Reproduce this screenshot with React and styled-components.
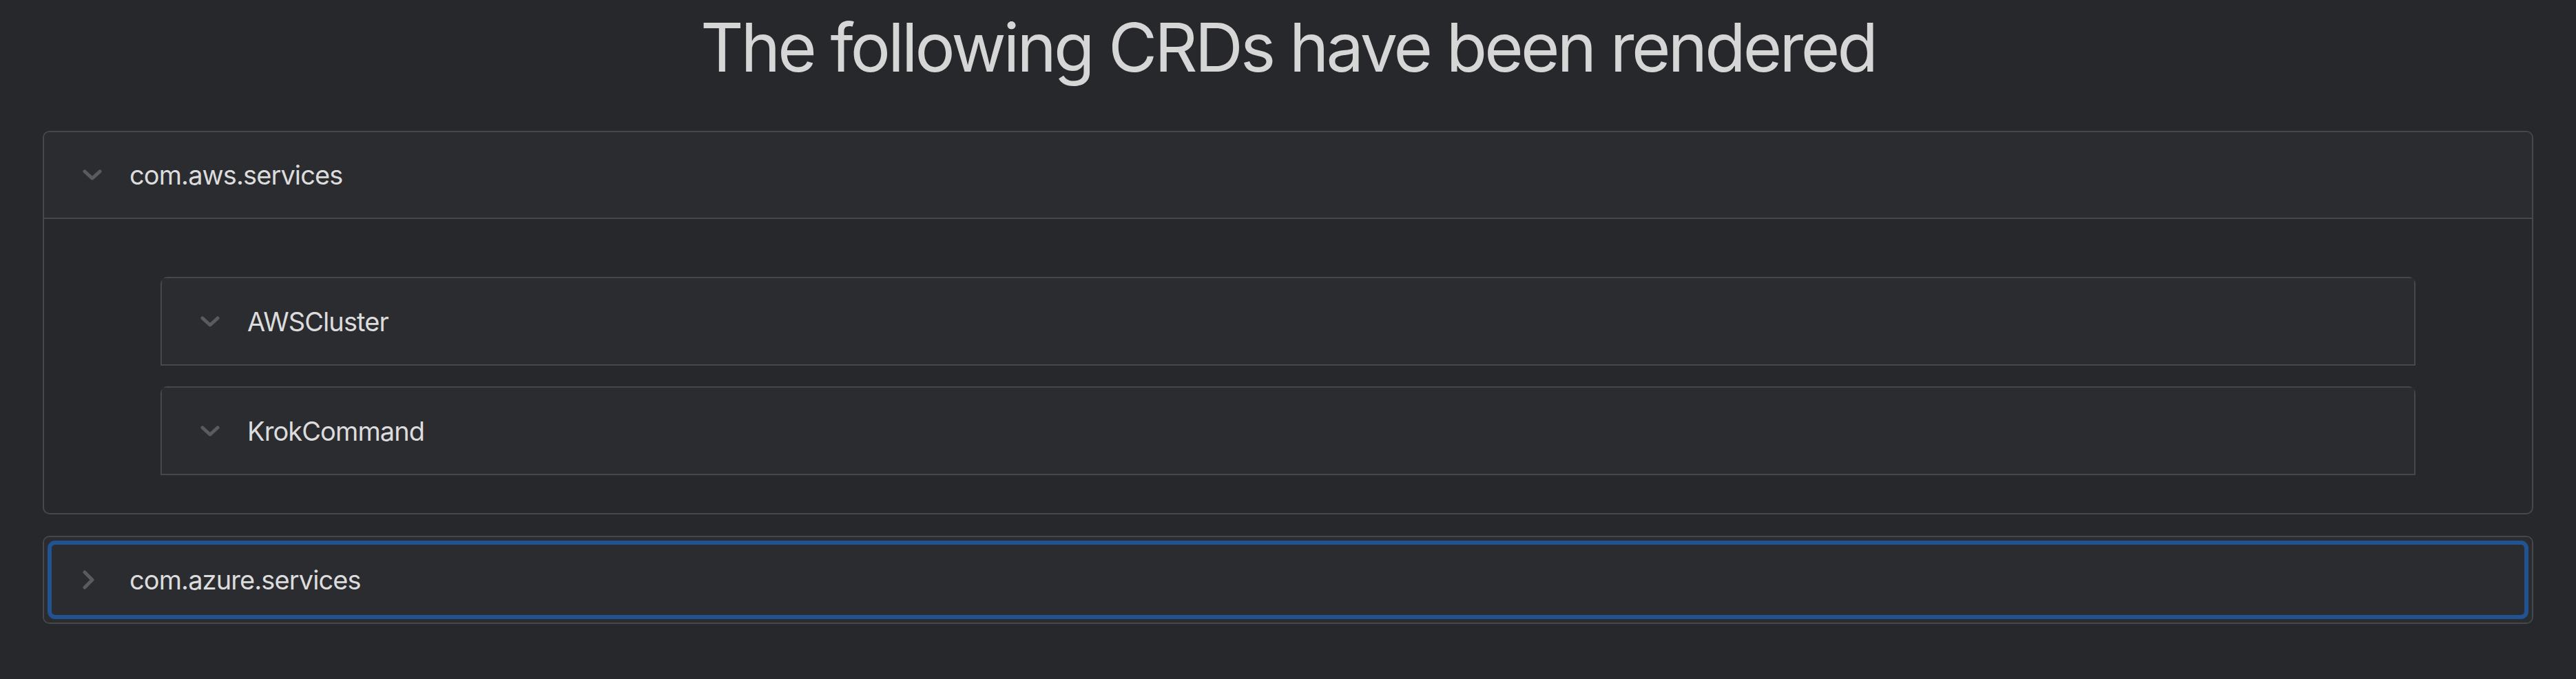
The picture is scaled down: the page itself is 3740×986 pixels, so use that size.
import React from 'react';
import styled, { createGlobalStyle, css } from 'styled-components';

const GlobalStyle = createGlobalStyle`
	body {
		margin: 0;
		background: #27282c;
		font-family: Inter, 'Noto Sans', sans-serif;
	}
`;

const groups = [
	{ name: 'com.aws.services', open: true, items: ['AWSCluster', 'KrokCommand'] },
	{ name: 'com.azure.services', open: false, focused: true, items: [] },
];

const Page = styled.div`
	min-height: 100vh;
	padding: 0 62px;
	box-sizing: border-box;
`;

const Title = styled.h1`
	margin: 0 0 73px;
	padding-top: 20px;
	font-size: 97px;
	line-height: 1;
	font-weight: 400;
	letter-spacing: -3.8px;
	text-align: center;
	color: #d6d6d7;
`;

const List = styled.div`
	display: flex;
	flex-direction: column;
	gap: 31px;
`;

const Group = styled.div`
	border: 2px solid #47484c;
	border-radius: 10px;
	overflow: hidden;
	background: #27282c;
`;

const Header = styled.div`
	position: relative;
	display: flex;
	align-items: center;
	gap: 40px;
	height: ${p => (p.$inner ? 125 : 124)}px;
	padding-left: 56px;
	background: #2b2c30;
	${p =>
		p.$open &&
		css`
			border-bottom: 2px solid #47484c;
		`}
	${p =>
		p.$focused &&
		css`
			&::after {
				content: '';
				position: absolute;
				inset: 5px;
				border: 6px solid #215392;
				border-radius: 11px;
			}
		`}
`;

const Label = styled.span`
	font-size: 38px;
	letter-spacing: -0.9px;
	color: #dcdcdd;
`;

const Body = styled.div`
	display: flex;
	flex-direction: column;
	gap: 30px;
	padding: 84px 169px 55px;
`;

const Item = styled.div`
	border: 2px solid #47484c;
	border-radius: 10px 10px 0 0;
	background: #2b2c30;
`;

const Chevron = ({ open }) => (
	<svg width="28" height="28" viewBox="0 0 28 28" fill="none">
		<polyline
			points={open ? '3,9 14,19 25,9' : '3,3 14,14 3,25'}
			stroke="#5a5b5f"
			strokeWidth="5"
			strokeLinecap="round"
			strokeLinejoin="round"
		/>
	</svg>
);

const App = () => {
	return (
		<Page>
			<GlobalStyle />
			<Title>The following CRDs have been rendered</Title>
			<List>
				{groups.map(g => (
					<Group key={g.name}>
						<Header $open={g.open} $focused={g.focused}>
							<Chevron open={g.open} />
							<Label>{g.name}</Label>
						</Header>
						{g.open && (
							<Body>
								{g.items.map(i => (
									<Item key={i}>
										<Header $inner>
											<Chevron open />
											<Label>{i}</Label>
										</Header>
									</Item>
								))}
							</Body>
						)}
					</Group>
				))}
			</List>
		</Page>
	);
};

export default App;
